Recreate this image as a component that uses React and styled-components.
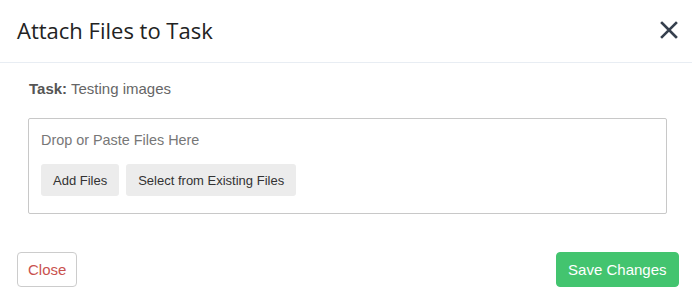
import React from 'react'
import styled, { createGlobalStyle } from 'styled-components'

const Global = createGlobalStyle`
  html, body { margin: 0; padding: 0; background: #fff; }
  body { font-family: "Liberation Sans", Arial, sans-serif; }
  * { box-sizing: border-box; }
`;

const Modal = styled.div`
  width: 692px;
  height: 301px;
  background: #fff;
  display: flex;
  flex-direction: column;
`;

const Header = styled.div`
  height: 63px;
  border-bottom: 1px solid #e8edf3;
  display: flex;
  align-items: center;
  justify-content: space-between;
  padding: 0 14px 0 17px;
`;

const Title = styled.h4`
  margin: 0;
  font-family: "Open Sans", sans-serif;
  font-weight: 400;
  font-size: 22px;
  color: #222;
  padding-bottom: 2px;
`;

const CloseIcon = styled.button`
  border: none;
  background: none;
  padding: 0;
  width: 18px;
  height: 18px;
  display: flex;
  cursor: pointer;
  margin-bottom: 2px;
`;

const Body = styled.div`
  padding: 16px 25px 0 28px;
  display: flex;
  flex-direction: column;
`;

const TaskLine = styled.div`
  font-size: 15px;
  line-height: 20px;
  color: #666;
  padding-left: 1px;
  b { color: #555; }
`;

const DropZone = styled.div`
  margin-top: 19px;
  height: 96px;
  border: 1px solid #c8c8c8;
  border-radius: 2px;
  padding: 11px 12px 0;
`;

const DropText = styled.div`
  font-size: 14.4px;
  line-height: 20px;
  color: #777;
`;

const BtnRow = styled.div`
  display: flex;
  gap: 7px;
  margin-top: 14px;
`;

const GreyButton = styled.button`
  height: 32px;
  padding: 0 12px;
  border: none;
  border-radius: 3px;
  background: #ececec;
  color: #333;
  font-family: "Liberation Sans", Arial, sans-serif;
  font-size: 13px;
`;

const Footer = styled.div`
  margin-top: auto;
  display: flex;
  justify-content: space-between;
  padding: 0 13px 14px 17px;
`;

const FooterButton = styled.button`
  height: 35px;
  padding: 0 ${(p) => (p.primary ? '11.5px' : '10px')};
  border-radius: 4px;
  font-family: "Liberation Sans", Arial, sans-serif;
  font-size: 15px;
  border: 1px solid ${(p) => (p.primary ? '#43c46f' : '#cccccc')};
  background: ${(p) => (p.primary ? '#43c46f' : '#fff')};
  color: ${(p) => (p.primary ? '#fff' : '#c9524e')};
`;

export default function App() {
  return (
    <>
      <Global />
      <Modal>
        <Header>
          <Title>Attach Files to Task</Title>
          <CloseIcon aria-label="close">
            <svg width="18" height="18" viewBox="0 0 18 18">
              <path d="M2 2 L16 16 M16 2 L2 16" stroke="#36404e" strokeWidth="2.6" strokeLinecap="square" />
            </svg>
          </CloseIcon>
        </Header>
        <Body>
          <TaskLine><b>Task:</b> Testing images</TaskLine>
          <DropZone>
            <DropText>Drop or Paste Files Here</DropText>
            <BtnRow>
              <GreyButton>Add Files</GreyButton>
              <GreyButton>Select from Existing Files</GreyButton>
            </BtnRow>
          </DropZone>
        </Body>
        <Footer>
          <FooterButton>Close</FooterButton>
          <FooterButton primary>Save Changes</FooterButton>
        </Footer>
      </Modal>
    </>
  )
}
